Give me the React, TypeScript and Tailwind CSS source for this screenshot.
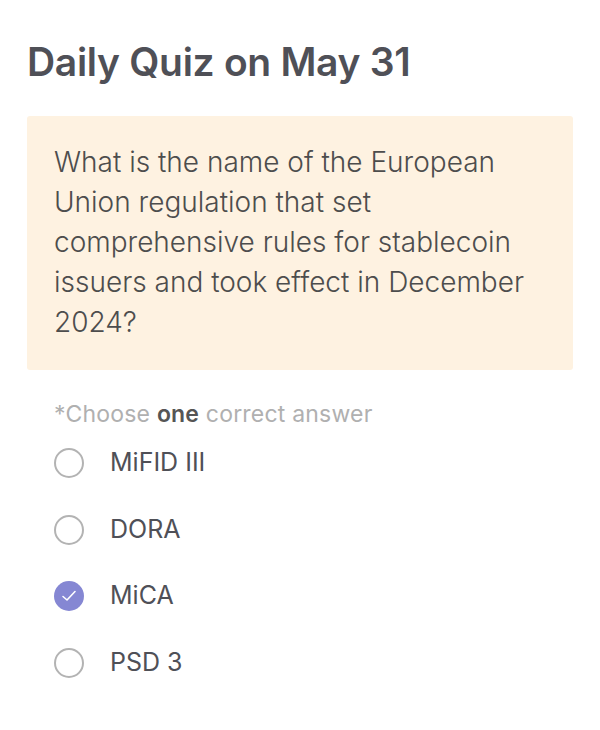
import React from "react";

const options = [
  { label: "MiFID III", checked: false },
  { label: "DORA", checked: false },
  { label: "MiCA", checked: true },
  { label: "PSD 3", checked: false },
];

export default function App() {
  return (
    <div
      className="w-[600px] h-[730px] bg-white px-[27px] pt-[38px]"
      style={{ fontFamily: "Inter, 'Noto Sans', sans-serif" }}
    >
      <h1 className="text-[39px] leading-[48px] font-semibold text-[#4f5057] tracking-[-0.3px]">
        Daily Quiz on May 31
      </h1>
      <div className="mt-[30px] bg-[#fef2e1] rounded-[3px] pl-[27px] pr-[20px] pt-[26px] pb-[28px]">
        <p className="text-[28px] leading-[40px] text-[#4d4d4d] font-light">
          What is the name of the European Union regulation that set comprehensive rules for stablecoin issuers and took effect in December 2024?
        </p>
      </div>
      <div className="px-[27px] pt-[29px]">
        <p className="text-[23px] leading-[30px] text-[#b0b0b0] tracking-[0.2px]">
          *Choose <span className="font-semibold text-[#555]">one</span> correct answer
        </p>
        <div className="mt-[19px] flex flex-col gap-[36.5px]">
          {options.map((o) => (
            <div key={o.label} className="flex items-center h-[30px]">
              {o.checked ? (
                <div className="w-[30px] h-[30px] rounded-full bg-[#8587d3] flex items-center justify-center">
                  <svg width="18" height="18" viewBox="0 0 18 18" fill="none">
                    <path d="M3 9.5 L7 13 L15 4.5" stroke="white" strokeWidth="1.6" strokeLinecap="round" strokeLinejoin="round" />
                  </svg>
                </div>
              ) : (
                <div className="w-[30px] h-[30px] rounded-full border-[2px] border-[#b3b3b3]" />
              )}
              <span className="ml-[26px] text-[25px] text-[#4f5057]">{o.label}</span>
            </div>
          ))}
        </div>
      </div>
    </div>
  );
}
